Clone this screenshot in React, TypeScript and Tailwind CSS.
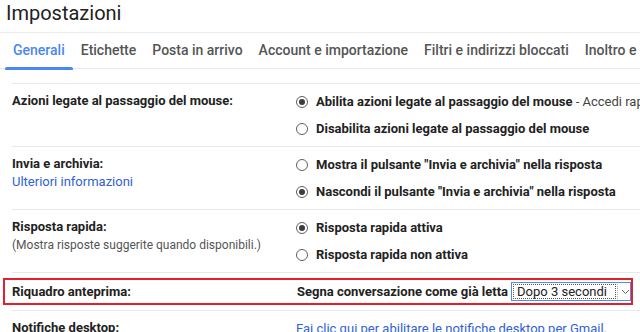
import React from "react";

const F = { fontFamily: "Roboto, 'Liberation Sans', Arial, sans-serif" };

function Radio({ checked }: { checked?: boolean }) {
  return (
    <span className="w-[12px] h-[12px] rounded-full border border-[#5f5f5f] flex items-center justify-center shrink-0 bg-white">
      {checked && <span className="w-[6px] h-[6px] rounded-full bg-[#3c3c3c]" />}
    </span>
  );
}

function Opt({ checked, children }: { checked?: boolean; children: React.ReactNode }) {
  return (
    <div className="flex items-center h-[27px] whitespace-nowrap">
      <Radio checked={checked} />
      <span className="ml-[8px] text-[13px] font-bold text-[#222]">{children}</span>
    </div>
  );
}

const tabs = [
  "Generali",
  "Etichette",
  "Posta in arrivo",
  "Account e importazione",
  "Filtri e indirizzi bloccati",
  "Inoltro e POP/IMAP",
];

export default function App() {
  return (
    <div className="w-[640px] h-[332px] overflow-hidden bg-white text-[#222]" style={F}>
      <div className="h-[33px] border-b border-[#ececec] pl-[6px] text-[20px] leading-[26px] text-[#222]">
        Impostazioni
      </div>
      <div className="h-[36px] border-b border-[#e8e8e8] flex pl-[5px] whitespace-nowrap">
        {tabs.map((t, i) => (
          <div
            key={t}
            className={
              "relative px-[8px] text-[14px] font-medium leading-[34px] " +
              (i === 0 ? "text-[#4a87f0]" : "text-[#555]")
            }
          >
            {t}
            {i === 0 && (
              <span className="absolute left-0 right-0 bottom-[-2px] h-[3px] bg-[#4a87f0] rounded-t-[2px]" />
            )}
          </div>
        ))}
      </div>
      <div className="h-[14px]" />
      <div className="pl-[12px]">
        {/* Row 1 */}
        <div className="border-t border-[#e8e8e8] flex py-[4px]">
          <div className="w-[284px] shrink-0 pt-[4px] leading-[18px] text-[13px] font-bold">
            Azioni legate al passaggio del mouse:
          </div>
          <div className="min-w-0">
            <Opt checked>
              Abilita azioni legate al passaggio del mouse
              <span className="font-normal text-[#444]"> - Accedi rapidamente ai controlli</span>
            </Opt>
            <Opt>Disabilita azioni legate al passaggio del mouse</Opt>
          </div>
        </div>
        {/* Row 2 */}
        <div className="border-t border-[#e8e8e8] flex py-[4px]">
          <div className="w-[284px] shrink-0 pt-[4px] leading-[18px] text-[13px]">
            <div className="font-bold">Invia e archivia:</div>
            <div className="text-[#2f62d6]">Ulteriori informazioni</div>
          </div>
          <div className="min-w-0">
            <Opt>Mostra il pulsante "Invia e archivia" nella risposta</Opt>
            <Opt checked>Nascondi il pulsante "Invia e archivia" nella risposta</Opt>
          </div>
        </div>
        {/* Row 3 */}
        <div className="border-t border-[#e8e8e8] flex py-[4px]">
          <div className="w-[284px] shrink-0 pt-[4px] leading-[18px]">
            <div className="font-bold text-[13px]">Risposta rapida:</div>
            <div className="text-[12px] text-[#555]">(Mostra risposte suggerite quando disponibili.)</div>
          </div>
          <div className="min-w-0">
            <Opt checked>Risposta rapida attiva</Opt>
            <Opt>Risposta rapida non attiva</Opt>
          </div>
        </div>
        {/* Row 4 - highlighted */}
        <div className="border-t border-[#e8e8e8] py-[5px]">
          <div className="-ml-[9px] mr-[7px] border-2 border-[#e3202c] h-[27px] flex items-center pl-[7px]">
            <div className="w-[285px] shrink-0 text-[13px] font-bold">Riquadro anteprima:</div>
            <div className="flex items-center whitespace-nowrap">
              <span className="text-[13px] font-bold">Segna conversazione come già letta</span>
              <div className="ml-[3px] w-[120px] h-[19px] border border-[#4a90e2] flex items-center bg-white">
                <span className="ml-[1px] h-[15px] w-[103px] border border-dotted border-[#555] text-[13px] leading-[13px] pl-[3px] text-[#222] flex items-center">
                  Dopo 3 secondi
                </span>
                <span className="ml-[1px] h-[15px] border-l border-dotted border-[#aaa]" />
                <svg width="9" height="6" viewBox="0 0 9 6" className="ml-[3px]">
                  <path d="M1 1 L4.5 4.5 L8 1" fill="none" stroke="#666" strokeWidth="1" />
                </svg>
              </div>
            </div>
          </div>
        </div>
        {/* Row 5 */}
        <div className="border-t border-[#e8e8e8] flex py-[4px]">
          <div className="w-[284px] shrink-0 pt-[4px] leading-[18px] text-[13px] font-bold">
            Notifiche desktop:
          </div>
          <div className="min-w-0 leading-[27px] text-[13px] text-[#2f62d6] whitespace-nowrap">
            Fai clic qui per abilitare le notifiche desktop per Gmail.
          </div>
        </div>
      </div>
    </div>
  );
}
